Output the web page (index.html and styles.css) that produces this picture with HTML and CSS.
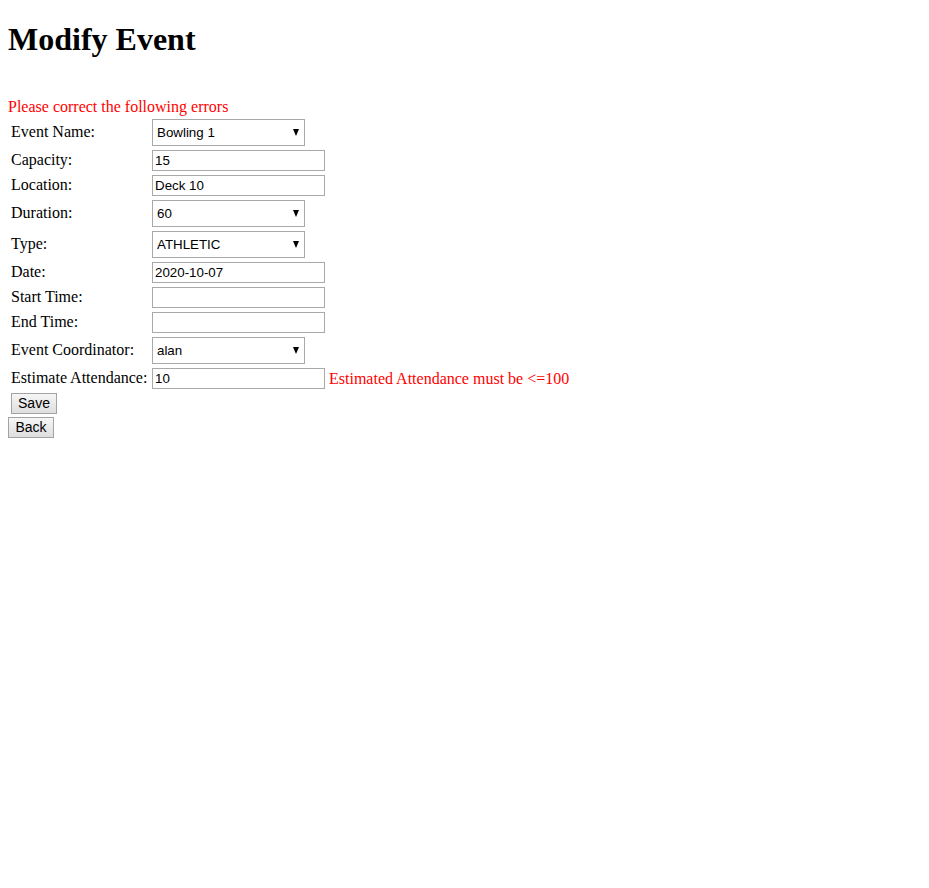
FILE: index.html
```html
<!DOCTYPE html>
<html>
<head>
<meta charset="utf-8">
<title>Modify Event</title>
<link rel="stylesheet" href="styles.css">
</head>
<body>
<h1 class="title">Modify Event</h1>
<form class="form">
<div class="errors">Please correct the following errors</div>
<table class="grid">
<tr><td class="label">Event Name:</td><td><span class="sel"><select class="field-select"><option>Bowling 1</option></select></span></td></tr>
<tr><td class="label">Capacity:</td><td><input class="field" type="text" value="15"></td></tr>
<tr><td class="label">Location:</td><td><input class="field" type="text" value="Deck 10"></td></tr>
<tr><td class="label">Duration:</td><td><span class="sel"><select class="field-select"><option>60</option></select></span></td></tr>
<tr><td class="label">Type:</td><td><span class="sel"><select class="field-select"><option>ATHLETIC</option></select></span></td></tr>
<tr><td class="label">Date:</td><td><input class="field" type="text" value="2020-10-07"></td></tr>
<tr><td class="label">Start Time:</td><td><input class="field" type="text" value=""></td></tr>
<tr><td class="label">End Time:</td><td><input class="field" type="text" value=""></td></tr>
<tr><td class="label">Event Coordinator:</td><td><span class="sel"><select class="field-select"><option>alan</option></select></span></td></tr>
<tr><td class="label">Estimate Attendance:</td><td><input class="field" type="text" value="10"> <span class="err">Estimated Attendance must be &lt;=100</span></td></tr>
<tr><td class="label"><button class="btn" type="button">Save</button></td><td></td></tr>
</table>
</form>
<button class="btn" type="button">Back</button>
</body>
</html>
```
FILE: styles.css
```css
html, body {
  background: #fff;
}
body {
  margin: 8px;
  font-family: "Liberation Serif", "Times New Roman", serif;
  font-size: 16px;
  color: #000;
}
.title {
  font-size: 32px;
  font-weight: bold;
  margin: 13.44px 0 21.44px;
  line-height: 37px;
}
.form {
  margin: 0;
}
.errors {
  color: #ff0000;
  padding-top: 18px;
  line-height: 18px;
}
.grid {
  border-spacing: 2px;
  border-collapse: separate;
}
.grid td {
  padding: 1px;
  vertical-align: middle;
  white-space: nowrap;
  line-height: 18px;
}
.grid .label {
  width: 137px;
}
.field {
  box-sizing: border-box;
  width: 173px;
  height: 21px;
  margin: 0;
  padding: 1px 2px;
  border: 1px solid #a9a9a9;
  font-family: "Liberation Sans", Arial, sans-serif;
  font-size: 13.33px;
  color: #000;
  vertical-align: middle;
  background: #fff;
}
.sel {
  position: relative;
  display: inline-block;
  vertical-align: middle;
}
.sel::after {
  content: "";
  position: absolute;
  right: 6px;
  top: 10px;
  border-left: 3.5px solid transparent;
  border-right: 3.5px solid transparent;
  border-top: 7px solid #000;
  pointer-events: none;
}
.field-select {
  -webkit-appearance: none;
  appearance: none;
  box-sizing: border-box;
  width: 153px;
  height: 27px;
  margin: 0;
  padding: 0 4px;
  border: 1px solid #a9a9a9;
  border-radius: 0;
  background: #fff;
  font-family: "Liberation Sans", Arial, sans-serif;
  font-size: 13.33px;
  color: #000;
  display: block;
}
.err {
  color: #ff0000;
  vertical-align: middle;
}
.btn {
  box-sizing: border-box;
  height: 21px;
  padding: 0;
  margin: 0;
  border: 1px solid #a3a3a3;
  border-radius: 0;
  background: linear-gradient(#f6f6f6, #dedede);
  font-family: "Liberation Sans", Arial, sans-serif;
  font-size: 14px;
  color: #000;
  display: block;
  width: 46px;
  text-align: center;
}
```
